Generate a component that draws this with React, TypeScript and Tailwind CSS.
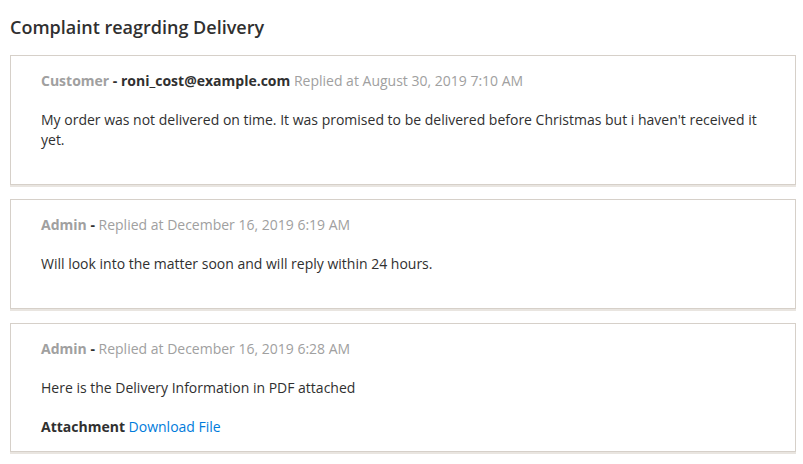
const replies = [
  {
    role: "Customer",
    email: "roni_cost@example.com",
    date: "August 30, 2019 7:10 AM",
    text: "My order was not delivered on time. It was promised to be delivered before Christmas but i haven't received it yet.",
  },
  {
    role: "Admin",
    date: "December 16, 2019 6:19 AM",
    text: "Will look into the matter soon and will reply within 24 hours.",
  },
  {
    role: "Admin",
    date: "December 16, 2019 6:28 AM",
    text: "Here is the Delivery Information in PDF attached",
    attachment: true,
  },
];

export default function App() {
  return (
    <div
      className="min-h-screen bg-white pl-[10px] pr-[7px] pt-[15px] text-[14px] text-[#303030]"
      style={{ fontFamily: '"Open Sans", "Liberation Sans", sans-serif' }}
    >
      <h2 className="mb-[15px] text-[18px] font-semibold leading-[25px] text-[#303030]">
        Complaint reagrding Delivery
      </h2>
      <div className="flex flex-col gap-[14px]">
        {replies.map((r, i) => (
          <div
            key={i}
            className="border border-[#d6d0c9] bg-white px-[30px] pb-[14px] pt-[15px] shadow-[0_2px_0_#e9e5e0]"
          >
            <div className="leading-[20px] text-[#a0a0a0]">
              <span className="font-bold">{r.role}</span>
              <span className="font-bold text-[#303030]"> - </span>
              {r.email && (
                <span className="font-bold text-[#303030]">{r.email} </span>
              )}
              {!r.email && " "}
              Replied at {r.date}
            </div>
            <p className={`mt-[19px] leading-[20px] ${r.attachment ? "" : "mb-[20px]"}`}>
              {r.text}
            </p>
            {r.attachment && (
              <div className="mt-[19px] leading-[20px]">
                <span className="font-bold">Attachment</span>{" "}
                <a href="#" className="text-[#007bdb]">
                  Download File
                </a>
              </div>
            )}
          </div>
        ))}
      </div>
    </div>
  );
}
